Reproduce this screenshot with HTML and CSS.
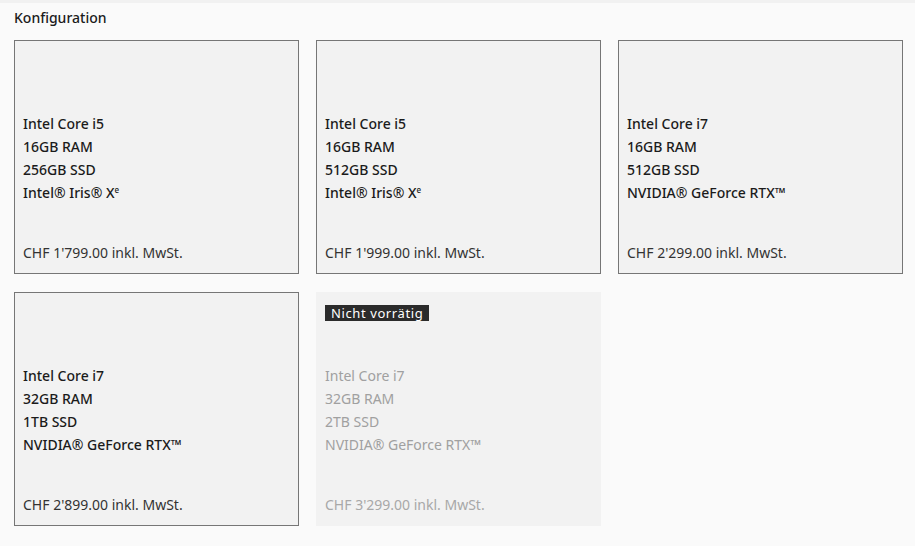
FILE: index.html
```html
<!DOCTYPE html>
<html lang="de">
<head>
    <meta charset="UTF-8">
    <meta name="viewport" content="width=device-width, initial-scale=1.0">
    <title>Konfiguration</title>
    <link rel="stylesheet" href="styles.css">
</head>
<body>
    <div class="config">
        <h2 class="config-title">Konfiguration</h2>
        <div class="config-grid">
            <div class="option">
                <div class="option-top"></div>
                <div class="specs">
                    <div>Intel Core i5</div>
                    <div>16GB RAM</div>
                    <div>256GB SSD</div>
                    <div>Intel® Iris® X<sup>e</sup></div>
                </div>
                <div class="price">CHF 1'799.00 inkl. MwSt.</div>
            </div>
            <div class="option">
                <div class="option-top"></div>
                <div class="specs">
                    <div>Intel Core i5</div>
                    <div>16GB RAM</div>
                    <div>512GB SSD</div>
                    <div>Intel® Iris® X<sup>e</sup></div>
                </div>
                <div class="price">CHF 1'999.00 inkl. MwSt.</div>
            </div>
            <div class="option">
                <div class="option-top"></div>
                <div class="specs">
                    <div>Intel Core i7</div>
                    <div>16GB RAM</div>
                    <div>512GB SSD</div>
                    <div>NVIDIA® GeForce RTX™</div>
                </div>
                <div class="price">CHF 2'299.00 inkl. MwSt.</div>
            </div>
            <div class="option">
                <div class="option-top"></div>
                <div class="specs">
                    <div>Intel Core i7</div>
                    <div>32GB RAM</div>
                    <div>1TB SSD</div>
                    <div>NVIDIA® GeForce RTX™</div>
                </div>
                <div class="price">CHF 2'899.00 inkl. MwSt.</div>
            </div>
            <div class="option disabled">
                <div class="option-top"><span class="badge">Nicht vorrätig</span></div>
                <div class="specs">
                    <div>Intel Core i7</div>
                    <div>32GB RAM</div>
                    <div>2TB SSD</div>
                    <div>NVIDIA® GeForce RTX™</div>
                </div>
                <div class="price">CHF 3'299.00 inkl. MwSt.</div>
            </div>
        </div>
    </div>
</body>
</html>
```

FILE: styles.css
```css
body {
    margin: 0;
    background: #fafafa;
    font-family: "Noto Sans", "Open Sans", sans-serif;
    font-size: 14px;
    color: #1b1b1b;
}

.config {
    border-top: 3px solid #f1f1f1;
    padding: 5px 0 0 14px;
}

.config-title {
    margin: 0 0 12px 0;
    font-size: 14px;
    line-height: 20px;
    font-weight: 500;
}

.config-grid {
    display: grid;
    grid-template-columns: repeat(3, 285px);
    column-gap: 17px;
    row-gap: 18px;
}

.option {
    height: 234px;
    box-sizing: border-box;
    background: #f2f2f2;
    border: 1px solid #767676;
    padding: 7px 8px 9px 8px;
    display: flex;
    flex-direction: column;
}

.option-top {
    height: 64px;
}

.specs {
    font-weight: 500;
    line-height: 23px;
}

.specs sup {
    font-size: 8px;
    vertical-align: 5px;
    line-height: 0;
}

.price {
    margin-top: auto;
    line-height: 23px;
    color: #333;
}

.disabled {
    border-color: transparent;
}

.disabled .specs {
    font-weight: 400;
    color: #a0a0a0;
}

.disabled .price {
    color: #a8a8a8;
}

.badge {
    display: inline-block;
    margin-top: 5px;
    background: #2b2b2b;
    color: #fff;
    font-size: 13px;
    line-height: 16px;
    padding: 0 6px;
    letter-spacing: 0.6px;
}
```
